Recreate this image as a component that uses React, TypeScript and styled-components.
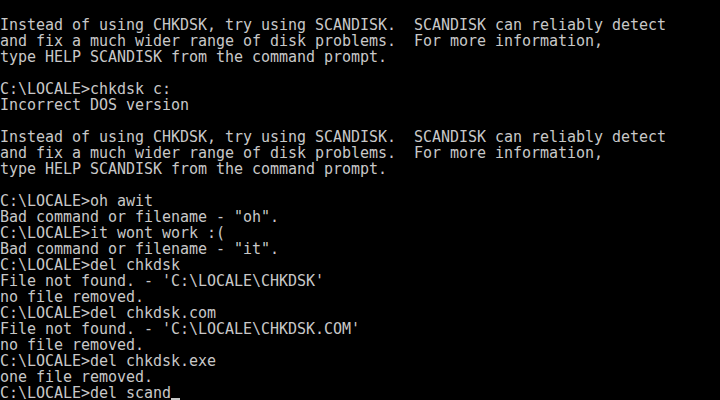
import React from "react";
import styled, { createGlobalStyle } from "styled-components";

const Global = createGlobalStyle`
  html, body { margin: 0; padding: 0; background: #000; }
  body { width: 720px; height: 400px; overflow: hidden; }
`;

const Screen = styled.div`
  box-sizing: border-box;
  width: 720px;
  height: 400px;
  padding-top: 1px;
  background: #000;
  color: #c8c8c8;
  font-family: "DejaVu Sans Mono", "Liberation Mono", monospace;
  font-size: 15px;
  display: flex;
  flex-direction: column;
  overflow: hidden;
`;

const Line = styled.div`
  flex: none;
  height: 16px;
  line-height: 16px;
  white-space: pre;
  letter-spacing: -0.03px;
`;

const Cursor = styled.span`
  display: inline-block;
  width: 9px;
  height: 15px;
  vertical-align: top;
  box-shadow: inset 0 -2px 0 #c8c8c8;
`;

const lines: string[] = [
  "",
  "Instead of using CHKDSK, try using SCANDISK.  SCANDISK can reliably detect",
  "and fix a much wider range of disk problems.  For more information,",
  "type HELP SCANDISK from the command prompt.",
  "",
  "C:\\LOCALE>chkdsk c:",
  "Incorrect DOS version",
  "",
  "Instead of using CHKDSK, try using SCANDISK.  SCANDISK can reliably detect",
  "and fix a much wider range of disk problems.  For more information,",
  "type HELP SCANDISK from the command prompt.",
  "",
  "C:\\LOCALE>oh awit",
  "Bad command or filename - \"oh\".",
  "C:\\LOCALE>it wont work :(",
  "Bad command or filename - \"it\".",
  "C:\\LOCALE>del chkdsk",
  "File not found. - 'C:\\LOCALE\\CHKDSK'",
  "no file removed.",
  "C:\\LOCALE>del chkdsk.com",
  "File not found. - 'C:\\LOCALE\\CHKDSK.COM'",
  "no file removed.",
  "C:\\LOCALE>del chkdsk.exe",
  "one file removed.",
];

export default function App() {
  return (
    <>
      <Global />
      <Screen>
        {lines.map((l, i) => (
          <Line key={i}>{l}</Line>
        ))}
        <Line>
          {"C:\\LOCALE>del scand"}
          <Cursor />
        </Line>
      </Screen>
    </>
  );
}
